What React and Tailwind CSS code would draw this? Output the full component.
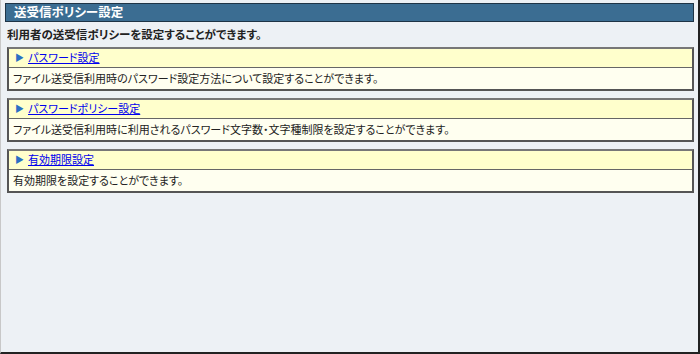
import React from 'react';

const items = [
    { title: 'パスワード設定', desc: 'ファイル送受信利用時のパスワード設定方法について設定することができます。' },
    { title: 'パスワードポリシー設定', desc: 'ファイル送受信利用時に利用されるパスワード文字数・文字種制限を設定することができます。' },
    { title: '有効期限設定', desc: '有効期限を設定することができます。' },
];

const PolicyBox = ({ title, desc }) => (
    <div className="border-2 border-[#555] border-t-[#777]">
        <div className="h-[19px] bg-[#ffffcc] border-b border-[#666] flex items-center pl-[6px]">
            <span className="text-[#2a6fc4] text-[9px] leading-none mr-[4px]">▶</span>
            <a href="#" className="text-[#0000ee] underline text-[11px] leading-none">{title}</a>
        </div>
        <div className="h-[21px] bg-[#fffff0] flex items-center pl-[4px] text-[11px] text-[#222]">
            {desc}
        </div>
    </div>
);

export default function App() {
    return (
        <div
            className="w-[700px] h-[354px] bg-[#edf1f5] border-l border-l-[#c8c8c8] border-r-2 border-r-[#222] border-b-2 border-b-[#222] pt-[3px] pl-[4px] pr-[4px] [font-feature-settings:'palt']"
            style={{ fontFamily: '"Noto Sans CJK JP", "Noto Sans", sans-serif' }}
        >
            <div className="h-[19px] bg-[#3b6d92] border border-[#1e3446] flex items-center pl-[8px]">
                <span className="text-white font-bold text-[12.5px] leading-none">送受信ポリシー設定</span>
            </div>
            <div className="pl-[2px] pt-[7px] pb-[6px] text-[11.5px] font-bold text-[#222] leading-none">
                利用者の送受信ポリシーを設定することができます。
            </div>
            <div className="flex flex-col gap-[7px] pl-[2px]">
                {items.map((it) => (
                    <PolicyBox key={it.title} {...it} />
                ))}
            </div>
        </div>
    );
}
